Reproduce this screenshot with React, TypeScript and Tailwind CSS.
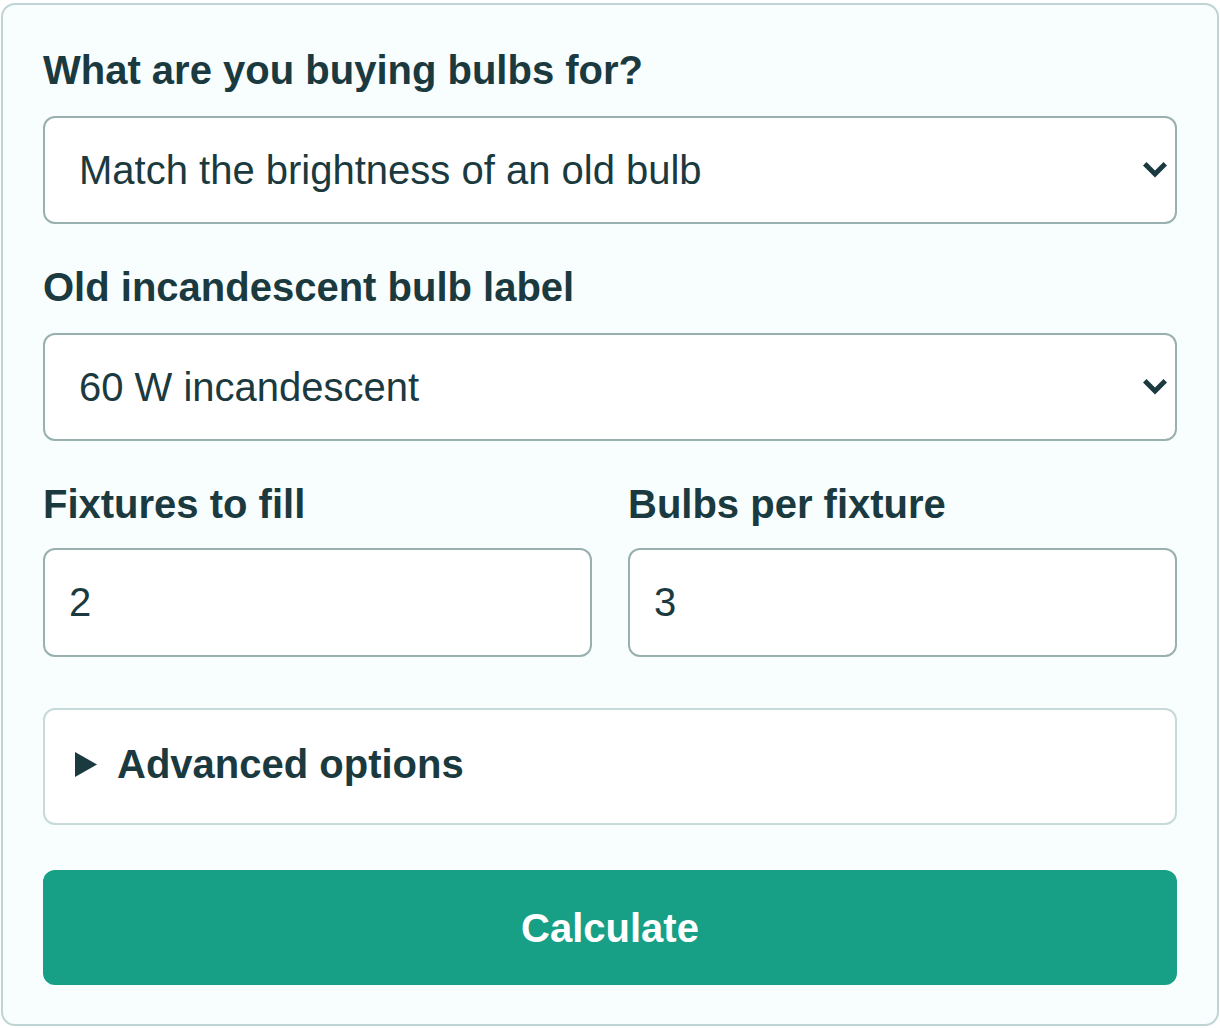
import React from "react";

function Chevron() {
  return (
    <svg
      className="pointer-events-none absolute right-[10px] top-1/2 -translate-y-1/2"
      width="24"
      height="16"
      viewBox="0 0 24 16"
    >
      <polygon points="0,3.5 3.5,0 12,8.5 20.5,0 24,3.5 12,15.5" fill="#1a3a40" />
    </svg>
  );
}

function SelectField({ label, value, options }: { label: string; value: string; options: string[] }) {
  return (
    <div className="mb-[39px]">
      <label className="mb-[22px] block text-[40px] font-bold leading-[48px]">{label}</label>
      <div className="relative">
        <select
          defaultValue={value}
          className="block h-[108px] w-full appearance-none rounded-[12px] border-2 border-[#98b0ae] bg-white pl-[34px] pr-[60px] text-[40px] text-[#1a3a40] outline-none"
        >
          {options.map((o) => (
            <option key={o}>{o}</option>
          ))}
        </select>
        <Chevron />
      </div>
    </div>
  );
}

function NumberField({ label, value }: { label: string; value: string }) {
  return (
    <div>
      <label className="mb-[20px] block text-[40px] font-bold leading-[48px]">{label}</label>
      <input
        type="text"
        defaultValue={value}
        className="block h-[109px] w-full rounded-[12px] border-2 border-[#98b0ae] bg-white pl-[24px] text-[40px] text-[#1a3a40] outline-none"
      />
    </div>
  );
}

export default function App() {
  return (
    <div className="pl-px pt-[3px] font-['Liberation_Sans',Arial,sans-serif] text-[#1a3a40]">
      <div className="w-[1218px] rounded-[14px] border-2 border-[#bfd4d4] bg-[#f8fdfe] px-[40px] pb-[39px] pt-[41px]">
        <SelectField
          label="What are you buying bulbs for?"
          value="Match the brightness of an old bulb"
          options={["Match the brightness of an old bulb", "Light a room", "Replace a fixture"]}
        />
        <SelectField
          label="Old incandescent bulb label"
          value="60 W incandescent"
          options={["40 W incandescent", "60 W incandescent", "75 W incandescent", "100 W incandescent"]}
        />

        <div className="grid grid-cols-2 gap-x-[36px]">
          <NumberField label="Fixtures to fill" value="2" />
          <NumberField label="Bulbs per fixture" value="3" />
        </div>

        <details className="mt-[51px] h-[117px] rounded-[12px] border-2 border-[#c7d9d9] bg-white">
          <summary className="flex list-none items-center gap-[20px] pl-[30px] pt-[30px] text-[40px] font-bold leading-[48px]">
            <svg width="22" height="25" viewBox="0 0 22 25">
              <polygon points="0,0 22,12.5 0,25" fill="#1a3a40" />
            </svg>
            Advanced options
          </summary>
        </details>

        <button
          type="button"
          className="mt-[45px] flex h-[115px] w-full items-center justify-center rounded-[12px] bg-[#17a086] text-[40px] font-bold text-white"
        >
          Calculate
        </button>
      </div>
    </div>
  );
}
